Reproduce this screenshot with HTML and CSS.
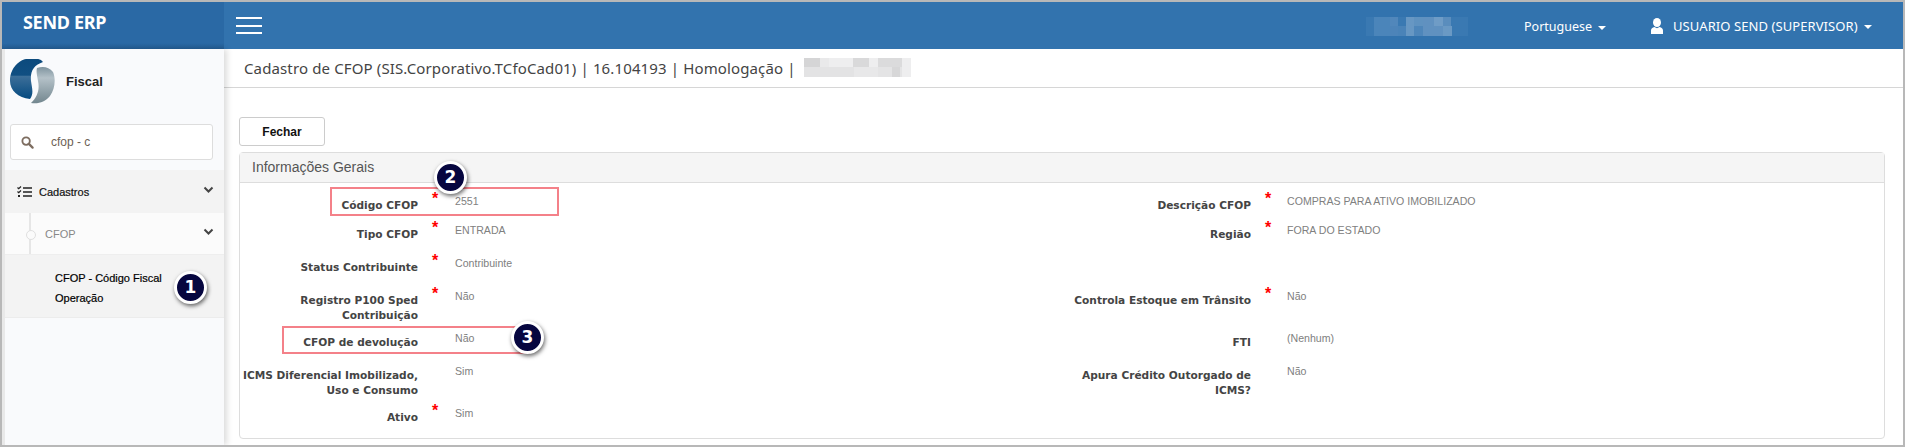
FILE: index.html
```html
<!DOCTYPE html>
<html lang="pt">
<head>
<meta charset="utf-8">
<title>Cadastro de CFOP</title>
<link rel="stylesheet" href="styles.css">
</head>
<body>
<div class="window">
  <header class="topbar">
    <div class="brand">SEND ERP</div>
    <button class="burger" aria-label="Menu"><span></span><span></span><span></span></button>
    <svg class="mosaic mosaic-top" width="102" height="19" viewBox="0 0 102 19">
      <rect width="102" height="19" fill="#3a79b2"/>
      <rect x="8" width="16" height="19" fill="#4b85ba"/><rect x="24" width="8" height="9" fill="#5187bb"/>
      <rect x="24" y="9" width="8" height="10" fill="#4d84b9"/><rect x="32" y="9" width="8" height="10" fill="#4a83b8"/>
      <rect x="40" width="8" height="19" fill="#6797c3"/>
      <rect x="48" width="17" height="9" fill="#5f92c0"/><rect x="48" y="9" width="9" height="10" fill="#4e86ba"/>
      <rect x="57" width="25" height="19" fill="#6091c0"/><rect x="68" width="9" height="9" fill="#6f9cc6"/>
      <rect x="77" width="8" height="9" fill="#5a8dbd"/><rect x="77" y="9" width="9" height="10" fill="#6a99c4"/>
    </svg>
    <a class="toplink lang">Portuguese<i class="caret"></i></a>
    <a class="toplink user">
      <svg class="user-icon" width="12" height="16" viewBox="0 0 12 16"><ellipse cx="6" cy="4.500" rx="4" ry="4.500" fill="#fff"/><path d="M0 16v-3.500c0-2 1.500-3.300 3.400-3.600l2.600 1.300 2.600-1.300c1.900.3 3.400 1.600 3.400 3.600V16z" fill="#fff"/></svg>
      USUARIO SEND (SUPERVISOR)<i class="caret"></i>
    </a>
  </header>

  <div class="body">
    <aside class="sidebar">
      <div class="module">
        <svg class="logo" width="45" height="45" viewBox="0 0 45 45">
          <defs>
            <linearGradient id="blue" x1="0" y1="0" x2="0" y2="1"><stop offset="0" stop-color="#0c4a7d"/><stop offset=".42" stop-color="#104f82"/><stop offset=".44" stop-color="#3d6f99"/><stop offset="1" stop-color="#054a80"/></linearGradient>
            <linearGradient id="grey" x1="0" y1="0" x2="0" y2="1"><stop offset="0" stop-color="#7f949f"/><stop offset=".3" stop-color="#b4c1c8"/><stop offset="1" stop-color="#73878f"/></linearGradient>
          </defs>
          <path d="M31 1A22 22 0 0 0 0 22C0 31 8 39 20 40C24 35 22 29 21 22C20 12 24 6 33 3Z" fill="url(#blue)"/>
          <path d="M27 9C33 7 39 8 43 13C46 20 45 30 40 37C35 43 29 45 21 44C27 38 30 31 28 22C27 16 26 12 27 9Z" fill="url(#grey)"/>
        </svg>
        <span class="module-name">Fiscal</span>
      </div>
      <div class="search">
        <svg width="13" height="13" viewBox="0 0 14 14"><circle cx="5.500" cy="5.500" r="4" fill="none" stroke="#7d6d60" stroke-width="2"/><path d="M8.500 8.500l4 4" stroke="#7d6d60" stroke-width="2.400" stroke-linecap="round"/></svg>
        <span>cfop - c</span>
      </div>
      <nav class="menu">
        <div class="menu-group">
          <svg class="list-icon" width="15" height="12" viewBox="0 0 15 12"><path d="M6 2h9M6 6h9M6 10h9" stroke="#222" stroke-width="1.600"/><path d="M.5 1.500l1.200 1.200L4 .5" fill="none" stroke="#222" stroke-width="1.200"/><path d="M.5 5.500l1.200 1.200L4 4.500" fill="none" stroke="#222" stroke-width="1.200"/><path d="M1 9h2v2H1z" fill="#222"/></svg>
          <span>Cadastros</span>
          <svg class="chev" width="11" height="8" viewBox="0 0 11 8"><path d="M1.500 1.500l4 4 4-4" fill="none" stroke="#444" stroke-width="2"/></svg>
        </div>
        <div class="menu-sub">
          <span>CFOP</span>
          <svg class="chev" width="11" height="8" viewBox="0 0 11 8"><path d="M1.500 1.500l4 4 4-4" fill="none" stroke="#444" stroke-width="2"/></svg>
        </div>
        <div class="menu-leaf">CFOP - Código Fiscal Operação</div>
      </nav>
    </aside>

    <main class="content">
      <div class="titlebar">
        <h1>Cadastro de CFOP (SIS.Corporativo.TCfoCad01) | 16.104193 | Homologação |</h1>
        <svg class="mosaic" width="107" height="19" viewBox="0 0 107 19">
          <rect width="107" height="19" fill="#eeeeef"/>
          <rect width="16" height="9" fill="#d5d5d6"/><rect y="9" width="50" height="10" fill="#e3e3e4"/>
          <rect x="16" width="9" height="9" fill="#e9e9ea"/><rect x="49" width="16" height="9" fill="#d9d9da"/>
          <rect x="50" y="9" width="24" height="10" fill="#e8e8e9"/><rect x="74" width="24" height="9" fill="#dbdbdc"/>
          <rect x="74" y="9" width="24" height="10" fill="#e4e4e5"/><rect x="88" y="9" width="8" height="10" fill="#d7d7d8"/>
        </svg>
      </div>
      <div class="toolbar"><button class="btn">Fechar</button></div>
      <section class="panel">
        <div class="panel-head">Informações Gerais</div>
        <div class="form">
          <div class="label">Código CFOP</div><div class="star">*</div><div class="value">2551</div>
          <div class="label">Descrição CFOP</div><div class="star">*</div><div class="value">COMPRAS PARA ATIVO IMOBILIZADO</div>

          <div class="label">Tipo CFOP</div><div class="star">*</div><div class="value">ENTRADA</div>
          <div class="label">Região</div><div class="star">*</div><div class="value">FORA DO ESTADO</div>

          <div class="label">Status Contribuinte</div><div class="star">*</div><div class="value">Contribuinte</div>
          <div></div><div></div><div></div>

          <div class="label">Registro P100 Sped Contribuição</div><div class="star">*</div><div class="value">Não</div>
          <div class="label">Controla Estoque em Trânsito</div><div class="star">*</div><div class="value">Não</div>

          <div class="label">CFOP de devolução</div><div class="star"></div><div class="value">Não</div>
          <div class="label">FTI</div><div class="star"></div><div class="value">(Nenhum)</div>

          <div class="label">ICMS Diferencial Imobilizado, Uso e Consumo</div><div class="star"></div><div class="value">Sim</div>
          <div class="label">Apura Crédito Outorgado de ICMS?</div><div class="star"></div><div class="value">Não</div>

          <div class="label">Ativo</div><div class="star">*</div><div class="value">Sim</div>
        </div>
      </section>
    </main>
  </div>

  <div class="mark mark-a"></div>
  <div class="mark mark-b"></div>
  <div class="badge badge-1">1</div>
  <div class="badge badge-2">2</div>
  <div class="badge badge-3">3</div>
</div>
</body>
</html>
```

FILE: styles.css
```css
* { box-sizing: border-box; }
html, body { margin: 0; padding: 0; background: #fff; }
body { font-family: "Liberation Sans", Arial, sans-serif; }

.window {
  position: relative;
  width: 1905px;
  height: 447px;
  border: solid #b8b8b8;
  border-width: 2px;
  overflow: hidden;
  display: flex;
  flex-direction: column;
}

/* top bar */
.topbar {
  flex: 0 0 47px;
  display: flex;
  align-items: center;
  background: #3273ae;
  color: #fff;
}
.brand {
  width: 222px;
  height: 47px;
  padding: 4px 0 0 21px;
  background: linear-gradient(#2a69a5 88%, #245d93);
  font: 700 18px/33px "Noto Sans", sans-serif;
  letter-spacing: -.3px;
}
.burger {
  width: 26px;
  height: 17px;
  margin-left: 12px;
  padding: 0;
  border: 0;
  background: none;
  display: flex;
  flex-direction: column;
  justify-content: space-between;
}
.burger span { display: block; height: 2px; background: #fff; }
.mosaic { display: block; flex: none; }
.mosaic-top { margin-left: 1104px; margin-top: 1px; }
.toplink {
  display: flex;
  align-items: center;
  font: 13px/16px "Noto Sans", sans-serif;
  color: #fff;
}
.lang { margin-left: 56px; margin-top: 2px; font-size: 12.500px; }
.user { margin-left: 45px; letter-spacing: .08px; }
.user-icon { margin-right: 10px; }
.caret {
  display: inline-block;
  margin-left: 6px;
  margin-top: 2px;
  border-left: 4px solid transparent;
  border-right: 4px solid transparent;
  border-top: 4px solid #fff;
}

/* body */
.body { flex: 1; display: flex; min-height: 0; }

.sidebar {
  flex: 0 0 222px;
  background: #f9fafc;
  border-left: 3px solid #e9e9e9;
  box-shadow: 3px 0 6px rgba(0,0,0,.14);
  z-index: 1;
}
.module {
  height: 75px;
  padding: 10px 0 0 5px;
  display: flex;
  align-items: flex-start;
}
.logo { display: block; }
.module-name {
  margin: 15px 0 0 11px;
  font: 700 13px/16px "Liberation Sans", sans-serif;
  color: #222;
}
.search {
  width: 203px;
  height: 36px;
  margin-left: 5px;
  padding-left: 10px;
  display: flex;
  align-items: center;
  gap: 17px;
  background: #fff;
  border: 1px solid #ddd;
  border-radius: 3px;
  font-size: 12px;
  color: #6d5f55;
}
.menu { margin-top: 10px; }
.menu-group {
  height: 43px;
  display: flex;
  align-items: center;
  padding: 0 10px 0 12px;
  background: #f3f3f3;
  font-size: 11px;
  color: #111;
  -webkit-text-stroke: .2px #111;
}
.list-icon { margin-right: 7px; }
.chev { margin-left: auto; margin-top: -4px; }
.menu-sub {
  position: relative;
  height: 42px;
  display: flex;
  align-items: center;
  padding: 0 10px 0 40px;
  background: #fbfbfb;
  border-bottom: 1px solid #eee;
  font-size: 11px;
  color: #888;
}
.menu-sub::before {
  content: "";
  position: absolute;
  left: 24px;
  top: 0;
  bottom: 0;
  width: 2px;
  background: #e6e6e6;
}
.menu-sub::after {
  content: "";
  position: absolute;
  left: 21px;
  top: 17px;
  width: 8px;
  height: 8px;
  border-radius: 50%;
  background: #fbfbfb;
  border: 1px solid #e0e0e0;
}
.menu-leaf {
  height: 63px;
  padding: 13px 40px 0 50px;
  background: #f3f3f3;
  border-bottom: 1px solid #ececec;
  font-size: 11px;
  line-height: 20px;
  color: #000;
  -webkit-text-stroke: .2px #000;
}

/* content */
.content { flex: 1; min-width: 0; background: #fff; }
.titlebar {
  height: 39px;
  padding: 9px 0 0 20px;
  display: flex;
  align-items: flex-start;
  gap: 8px;
  border-bottom: 1px solid #d6d6d6;
}
.titlebar h1 {
  margin: 0;
  font: 400 15px/20px "Noto Sans", sans-serif;
  letter-spacing: .13px;
  color: #444;
  white-space: nowrap;
}
.toolbar { padding: 29px 0 0 15px; height: 64px; }
.btn {
  width: 86px;
  height: 29px;
  padding: 0;
  background: #fff;
  border: 1px solid #ccc;
  border-radius: 3px;
  font: 700 12px "Liberation Sans", sans-serif;
  color: #111;
}
.panel {
  width: 1646px;
  height: 287px;
  margin-left: 15px;
  border: 1px solid #ddd;
  border-radius: 4px;
}
.panel-head {
  height: 30px;
  padding-left: 12px;
  background: #f5f5f5;
  border-bottom: 1px solid #ddd;
  font: 14px/28px "Liberation Sans", sans-serif;
  color: #555;
}
.form {
  display: grid;
  grid-template-columns: 178px 37px 618px 178px 36px 1fr;
  grid-template-rows: 29px 33px 33px 42px 33px 42px 33px;
  padding-top: 15px;
}
.label {
  font: 700 10.600px/15px "DejaVu Sans", sans-serif;
  color: #444;
  text-align: right;
}
.star {
  padding: 0 0 0 14px;
  margin-top: -7px;
  font: 700 16px/16px "Liberation Sans", sans-serif;
  color: #f00;
}
.value {
  margin-top: -5px;
  font: 10.600px/16px "Liberation Sans", sans-serif;
  color: #808080;
}

/* annotations */
.mark { position: absolute; z-index: 2; border: 2px solid #f48189; }
.mark-a { left: 328px; top: 185px; width: 229px; height: 29px; }
.mark-b { left: 280px; top: 324px; width: 248px; height: 28px; }
.badge {
  position: absolute;
  z-index: 3;
  width: 33px;
  height: 33px;
  border-radius: 50%;
  background: #06063f;
  border: 3px solid #fff;
  box-shadow: 1px 2px 4px rgba(0,0,0,.6);
  color: #fff;
  text-align: center;
  font: 700 17px/27px "DejaVu Sans", sans-serif;
}
.badge-1 { left: 172px; top: 269px; }
.badge-2 { left: 432px; top: 159px; }
.badge-3 { left: 509px; top: 319px; }
```
